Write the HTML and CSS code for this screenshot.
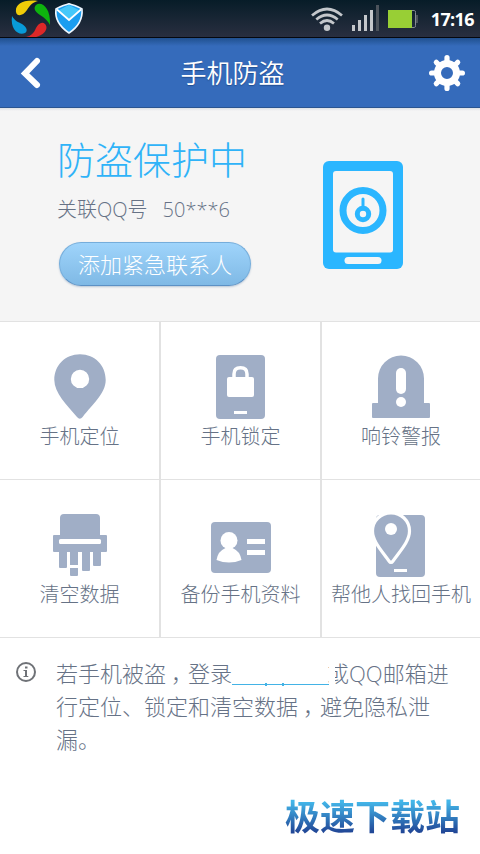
FILE: index.html
```html
<!DOCTYPE html>
<html lang="zh-CN">
<head>
<meta charset="utf-8">
<title>手机防盗</title>
<link rel="stylesheet" href="styles.css">
</head>
<body>
<div class="status">
  <svg class="status-left" width="90" height="37" viewBox="0 0 90 37">
    <path fill="#efcc08" d="M16 12C15 5 22-1 38 1C33 2 30 5 27 10C23 16 17 17 16 12Z"/>
    <path fill="#0eb30e" d="M36 5C41 1 51 7 50 25C48 21 45 18 40 15C35 12 33 8 36 5Z"/>
    <path fill="#dc2828" d="M45 24C50 29 42 40 26 37C31 36 34 33 36 28C38 24 42 21 45 24Z"/>
    <path fill="#089bd8" d="M25 33C19 36 10 30 12 16C15 21 18 22 22 24C27 27 28 31 25 33Z"/>
    <path fill="#1b9df0" stroke="#eef7ff" stroke-width="1.6" stroke-linejoin="round" d="M69 3.8C73 5 78 6 82 9C83 20 78 27 69 33C60 27 54.500 20 56 9C60 6 65 5 69 3.800Z"/>
    <path fill="#45c8fa" d="M69 5L79 10L69 19L59 10Z"/>
    <path fill="none" stroke="#fff" stroke-width="1.800" d="M57 9.500L69 20L81 9.500"/>
  </svg>
  <div class="status-right">
    <svg width="110" height="37" viewBox="0 0 110 37">
      <g fill="none" stroke="#c4c7cb" stroke-width="2.700">
        <path d="M2 15.500Q17 2.500 32 15.500"/>
        <path d="M6.300 19.500Q17 10.500 27.700 19.500"/>
        <path d="M10 23.500Q17 17.500 24 23.500"/>
      </g>
      <circle cx="17" cy="27.700" r="3.200" fill="#c4c7cb"/>
      <path fill="#c4c7cb" d="M42 25h3v6h-3zM48 20h3v11h-3zM54 15h3v16h-3zM60 10h3v21h-3z"/>
      <path fill="#4c535c" d="M66 5h3v26h-3zM106 15h2v8h-2z"/>
      <path fill="#98cf35" d="M78 10h24v18H78z"/>
      <path fill="none" stroke="#858b91" d="M102 10.500h2.500q1 0 1 2v13q0 2-1 2H102"/>
    </svg>
    <span class="clock">17:16</span>
  </div>
</div>
<header class="header">
  <svg width="22" height="34" viewBox="0 0 22 34"><path fill="none" stroke="#fff" stroke-width="6" stroke-linecap="round" stroke-linejoin="miter" d="M17 5L5 17.500L17 29"/></svg>
  <h1 class="title">手机防盗</h1>
  <svg width="36" height="36" viewBox="-18 -18 36 36">
    <g fill="none" stroke="#fff" stroke-width="5.200" stroke-linecap="round">
      <path d="M0-15.400V-9M0 15.400V9M-15.400 0H-9M15.400 0H9M-10.700-10.700L-7-7M10.700-10.700L7-7M-10.700 10.700L-7 7M10.700 10.700L7 7"/>
      <circle r="9.500" stroke-width="7"/>
    </g>
  </svg>
</header>
<section class="hero">
  <div class="hero-text">
    <div class="state">防盗保护中</div>
    <div class="account"><span>关联QQ号</span><span>50***6</span></div>
    <button class="add">添加紧急联系人</button>
  </div>
  <svg class="phone" width="80" height="108" viewBox="0 0 80 108">
    <rect width="80" height="108" rx="6" fill="#2ab6ff"/>
    <rect x="10" y="10" width="60" height="81.500" rx="3" fill="#f5f5f5"/>
    <rect x="21.500" y="96" width="37" height="7" rx="3.500" fill="#f5f5f5"/>
    <g fill="none" stroke="#2ab6ff">
      <circle cx="40" cy="49.500" r="20" stroke-width="7"/>
      <circle cx="40" cy="53" r="5.700" stroke-width="5"/>
      <path d="M40 38v10" stroke-width="3" stroke-linecap="round"/>
    </g>
  </svg>
</section>
<main class="grid">
  <div class="cell">
    <svg class="icon" viewBox="0 0 80 66"><path fill-rule="evenodd" d="M40 1.300C25 1.300 14.300 12.500 14.300 27C14.300 40 27 52 37 64Q39.800 67.500 42.600 64C53 51 65.700 40 65.700 27C65.700 12.500 55 1.300 40 1.300ZM40 16.700a9.200 9.200 0 1 1 0 18.400a9.200 9.200 0 1 1 0-18.400Z"/></svg>
    <span>手机定位</span>
  </div>
  <div class="cell">
    <svg class="icon" viewBox="0 0 80 66"><rect x="15" y="2" width="49" height="64" rx="4"/><rect x="26" y="24" width="27" height="20" rx="2" fill="#fff"/><path d="M33 26v-5q0-6.200 6.500-6.200t6.500 6.200v5" fill="none" stroke="#fff" stroke-width="3.500"/><path fill="#fff" d="M33 58h13v3H33z"/></svg>
    <span>手机锁定</span>
  </div>
  <div class="cell">
    <svg class="icon" viewBox="0 0 80 66"><path d="M17 50V25.500a23 23 0 0 1 46 0V50h5q1 0 1 1v13q0 1-1 1H12q-1 0-1-1V51q0-1 1-1Z"/><rect x="35" y="15" width="10" height="26" rx="5" fill="#fff"/><circle cx="40" cy="49" r="5" fill="#fff"/></svg>
    <span>响铃警报</span>
  </div>
  <div class="cell">
    <svg class="icon" viewBox="0 0 80 66"><path d="M20 24V7q0-4 4-4h32q4 0 4 4v17h6q1 0 1 1v15q0 1-1 1h-5v13q0 1-1 1h-6q-1 0-1-1V41h-3v18q0 1-1 1h-6q-1 0-1-1V41h-4v13h-8V41h-3v15q0 1-1 1h-6q-1 0-1-1V41h-5q-1 0-1-1V25q0-1 1-1ZM30 57h8v7q0 1-1 1h-6q-1 0-1-1Z"/><rect x="19" y="28" width="42" height="5" rx="1.500" fill="#fff"/></svg>
    <span>清空数据</span>
  </div>
  <div class="cell">
    <svg class="icon" viewBox="0 0 80 66"><rect x="10" y="11" width="60" height="51" rx="4"/><g fill="#fff"><circle cx="28" cy="29.500" r="8.500"/><path d="M15.500 49Q17 40 24.500 37h7Q39 40 40.500 49Q28 54 15.500 49ZM46 28h18v5H46zM46 39h18v5H46z"/></g></svg>
    <span>备份手机资料</span>
  </div>
  <div class="cell">
    <svg class="icon" viewBox="0 0 80 66"><rect x="15" y="4" width="49" height="62" rx="4"/><path d="M30 .9C20 .9 11.500 8.500 11.500 19C11.500 29 20 38 28 49Q30 52 32 49C40 38 48.500 29 48.500 19C48.500 8.500 40 .9 30 .9Z" transform="translate(0 1)" stroke="#fff" stroke-width="3.200"/><circle cx="30" cy="18" r="6" fill="#fff"/><path fill="#fff" d="M33 58h13v3H33z"/></svg>
    <span>帮他人找回手机</span>
  </div>
</main>
<section class="tip">
  <svg class="info" width="20" height="20" viewBox="0 0 20 20"><circle cx="10" cy="10" r="9" fill="none" stroke="#6f7277" stroke-width="2"/><path fill="#6f7277" d="M9 4.500h2.500v2H9zM7.500 8H11v6h1.300v1H7.500v-1H9V9H7.500z"/></svg>
  <p class="tip-text">若手机被盗<span class="comma">，</span>登录<a class="link"></a>或QQ邮箱进<br>行定位、锁定和清空数据<span class="comma">，</span>避免隐私泄<br>漏。</p>
</section>
<footer class="brand"><span>极速下载站</span></footer>
</body>
</html>
```
FILE: styles.css
```css
* { box-sizing: border-box; }
body {
  margin: 0;
  width: 480px;
  height: 854px;
  overflow: hidden;
  background: #fff;
  color: #667286;
  font-family: "Open Sans", "Noto Sans CJK SC", sans-serif;
  font-weight: 300;
  display: flex;
  flex-direction: column;
}
svg { display: block; flex: none; }
.status {
  height: 38px;
  display: flex;
  justify-content: space-between;
  background: linear-gradient(#071c28, #292f40);
  border-bottom: 1px solid #05080f;
}
.status-right { display: flex; padding-right: 6px; gap: 11px; }
.clock { color: #fff; font: 700 18px/38px "Open Sans", sans-serif; letter-spacing: -0.6px; }
.header {
  height: 70px;
  display: flex;
  align-items: center;
  justify-content: space-between;
  padding: 0 15px 0 20px;
  background: linear-gradient(#20508f, #356bbb 8px);
  border-bottom: 1px solid #2b5590;
}
.title {
  margin: 0 0 0 -6px;
  font-size: 26px;
  line-height: 36px;
  font-weight: 350;
  color: #fff;
  text-shadow: 0 1px 1px #234f91;
}
.hero {
  height: 213px;
  display: flex;
  justify-content: space-between;
  padding: 24px 77px 0 57px;
  background: linear-gradient(#dfe2e6, #f5f5f5 3px);
}
.state { font-size: 38px; line-height: 54px; color: #2fb3f8; }
.account { display: flex; gap: 15px; margin-top: 9px; font-size: 20px; line-height: 30px; }
.add {
  display: block;
  width: 192px;
  height: 44px;
  margin: 17px 0 0 2px;
  padding: 0 0 1px;
  border: 1px solid #75addb;
  border-bottom-color: #5c91c5;
  border-radius: 22px;
  background: linear-gradient(#9fd4fb, #7fb9e5);
  box-shadow: 0 1px 2px #b8c6d6;
  color: #fff;
  font: inherit;
  font-size: 22px;
  line-height: 40px;
}
.phone { margin-top: 29px; }
.grid {
  display: grid;
  grid-template-columns: 161px 161px 158px;
  grid-template-rows: 158px 158px;
  border-top: 1px solid #e2e2e2;
}
.cell {
  display: flex;
  flex-direction: column;
  align-items: center;
  padding-top: 31px;
  border-right: 2px solid #e2e2e2;
  border-bottom: 1px solid #e2e2e2;
  font-size: 20px;
  line-height: 30px;
  white-space: nowrap;
}
.cell:nth-child(3n) { border-right: 0; }
.icon { width: 80px; height: 66px; fill: #a0aec6; margin-bottom: 3px; }
.tip { display: flex; padding: 19px 0 0 16px; }
.info { margin-top: 5px; }
.tip-text { margin: 0 0 0 20px; font-size: 22px; line-height: 33px; white-space: nowrap; }
.comma { margin: 0 -5px 0 5px; }
.link {
  display: inline-block;
  position: relative;
  width: 97px;
  height: 1px;
  margin-right: -2px;
  vertical-align: -3px;
  background: #43b3e6;
}
.link::before {
  content: "";
  position: absolute;
  left: 33px;
  top: -1px;
  width: 15px;
  height: 3px;
  border: solid #43b3e6;
  border-width: 0 2px;
}
.link::after {
  content: "";
  position: absolute;
  left: 97px;
  top: -22px;
  width: 6px;
  height: 26px;
  background: #fff;
}
.brand {
  display: flex;
  justify-content: flex-end;
  padding: 36px 20px 0 0;
  font-size: 35px;
  line-height: 50px;
  font-weight: 700;
}
.brand span {
  color: transparent;
  background: linear-gradient(#43b6e9 20%, #214797 80%);
  background-clip: text;
  -webkit-background-clip: text;
}
```
